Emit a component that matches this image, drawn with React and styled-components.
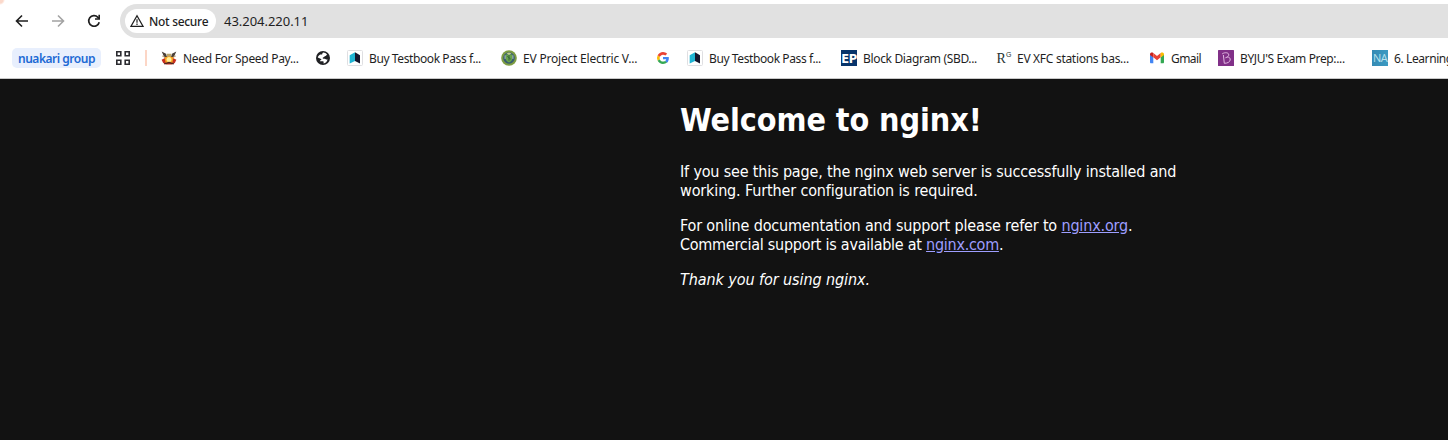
import React from 'react';
import styled, { createGlobalStyle } from 'styled-components';

const GlobalStyle = createGlobalStyle`
  * { box-sizing: border-box; }
  html, body { margin: 0; padding: 0; background: #121212; }
  body { overflow: hidden; }
`;

const Window = styled.div`
  width: 1448px;
  height: 440px;
  display: flex;
  flex-direction: column;
  overflow: hidden;
  background: #121212;
`;

const Chrome = styled.header`
  flex: none;
  height: 79px;
  background: radial-gradient(circle at 0 0, #fbd9cb 0, #fbd9cb 3px, #fff 5px);
  border-bottom: 1px solid #c9c9c9;
  font-family: 'Noto Sans', 'Open Sans', sans-serif;
  color: #1f1f1f;
`;

const Toolbar = styled.div`
  height: 38px;
  padding: 4px 0 0 12px;
  display: flex;
  align-items: center;
`;

const NavButton = styled.span`
  width: 20px;
  height: 20px;
  margin-right: 16px;
  display: flex;
  align-items: center;
  justify-content: center;
  color: ${(p) => (p.$muted ? '#a3a3a3' : '#1f1f1f')};
`;

const AddressBar = styled.div`
  flex: 1;
  height: 34px;
  padding-left: 5px;
  display: flex;
  align-items: center;
  background: #e1e1e1;
  border-radius: 17px 0 0 17px;
`;

const SecurityChip = styled.span`
  width: 91px;
  height: 24px;
  padding-left: 4px;
  display: flex;
  align-items: center;
  gap: 4px;
  background: #fff;
  border-radius: 12px;
  font-size: 12px;
  font-weight: 500;
  letter-spacing: -0.3px;
  white-space: nowrap;
`;

const Address = styled.span`
  margin-left: 8px;
  font-size: 13px;
  letter-spacing: -0.03px;
`;

const BookmarksBar = styled.nav`
  height: 40px;
  padding-left: 12px;
  display: flex;
  align-items: center;
`;

const GroupChip = styled.span`
  width: 89px;
  height: 20px;
  flex: none;
  display: flex;
  align-items: center;
  justify-content: center;
  background: #e8effd;
  border-radius: 5px;
  color: #1c69d4;
  font-size: 12px;
  font-weight: 600;
  letter-spacing: -0.48px;
  white-space: nowrap;
`;

const AppsButton = styled.span`
  flex: none;
  margin-left: 14px;
  width: 16px;
  height: 16px;
  display: flex;
`;

const Divider = styled.span`
  flex: none;
  width: 2px;
  height: 16px;
  margin: 0 14px;
  background: #fcd6c6;
`;

const Bookmark = styled.span`
  flex: none;
  width: ${(p) => p.$width}px;
  height: 20px;
  display: flex;
  align-items: center;
  gap: 6px;
  font-size: 12px;
  letter-spacing: ${(p) => p.$spacing || 0}px;
  white-space: nowrap;
  svg { flex: none; }
`;

const Page = styled.main`
  flex: 1;
  width: 560px;
  margin-left: 680px;
  color: #fff;
  font-family: 'DejaVu Sans Condensed', 'DejaVu Sans', sans-serif;
  font-stretch: condensed;
  font-size: 16px;
  line-height: 19px;
`;

const Title = styled.h1`
  margin: 22px 0;
  font-size: 32px;
  line-height: 39px;
  font-weight: 700;
  letter-spacing: ${(p) => p.$spacing}px;
  white-space: nowrap;
`;

const Paragraph = styled.p`
  margin: 0 0 16px;
`;

const Line = styled.span`
  display: block;
  white-space: nowrap;
  letter-spacing: ${(p) => p.$spacing}px;
`;

const Link = styled.a`
  color: #9e9eff;
  text-decoration: underline;
`;

const Thanks = styled.em`
  letter-spacing: ${(p) => p.$spacing}px;
`;

const Arrow = ({ flip }) => (
  <svg width="14" height="14" viewBox="0 0 14 14" fill="none" stroke="currentColor" strokeWidth="1.6">
    <path d={flip ? 'M1 7h11M7 1.5 12.5 7 7 12.5' : 'M13 7H2M7 1.5 1.5 7 7 12.5'} />
  </svg>
);

const Reload = () => (
  <svg width="14" height="14" viewBox="0 0 14 14">
    <path d="M12.2 8.2A5.3 5.3 0 1 1 10.9 3.3L12 4.5" fill="none" stroke="currentColor" strokeWidth="1.7" />
    <path d="M13 .8v5H8V4.3h3.4V.8z" fill="currentColor" />
  </svg>
);

const Warning = () => (
  <svg width="16" height="16" viewBox="0 0 16 16">
    <path d="M8 2.7 14 13.3H2z" fill="none" stroke="#1f1f1f" strokeWidth="1.3" />
    <path d="M8 6.3v3.4M8 10.6v1.3" stroke="#1f1f1f" strokeWidth="1.2" />
  </svg>
);

const Apps = () => (
  <svg width="16" height="16" viewBox="0 0 16 16" fill="none" stroke="#2b2b30" strokeWidth="1.6">
    <path d="M1.8 1.8h4v4h-4zM10.2 1.8h4v4h-4zM1.8 10.2h4v4h-4zM10.2 10.2h4v4h-4z" />
  </svg>
);

const Emblem = () => (
  <svg width="16" height="16" viewBox="0 0 16 16">
    <path d="M.7 1.4 5 3.8l.8 2.5h4.4l.8-2.5 4.3-2.4-2.2 5-2.3 3H5.2l-2.3-3z" fill="#4a4038" />
    <path d="M5.5 3.7h5l-1 4h-3z" fill="#b9a56c" />
    <path d="m1.2 6 3.2 1.5M14.8 6l-3.2 1.5" stroke="#b99b70" />
    <path d="M.6 9.8 4 8h8l3.4 1.8-1.6 3.1-3 1.5H5.2l-3-1.5z" fill="#c62f20" />
    <path d="m3.6 7.3 4.4-1 4.4 1-1 5.8H4.6z" fill="#f5a020" />
    <circle cx="8" cy="9.5" r="2.5" fill="#fff09a" />
    <path d="M3.2 13.8 8 12.5l4.8 1.3" fill="none" stroke="#4b2520" strokeWidth="1.3" />
  </svg>
);

const Globe = () => (
  <svg width="16" height="16" viewBox="0 0 16 16">
    <circle cx="8" cy="8" r="7" fill="#202124" />
    <path d="M8.2 2.6c1.500.1 3 .8 3.900 2-.8.7-1.200 1.800-2.500 1.800-.8 0-.6 1-1.500 1-.7 0-.4 1.300.4 1.300h1.300c1 0 1 .9 1.900.9h.9c-.7 2.200-1.900 3.600-4 3.800-.3-.6.6-1.800-.5-2.200H4.800c.1-.9 1.600-.6 1.600-1.600 0-1.200-2.400-1.300-3.600-2.100.3-1.200 1.300-2.400 2.500-2.900h1.600c.8-.3.1-1.500 1.300-2z" fill="#fff" />
  </svg>
);

const Testbook = () => (
  <svg width="16" height="16" viewBox="0 0 16 16">
    <rect x=".5" y=".5" width="15" height="15" rx="1" fill="#fff" stroke="#dfdfe2" />
    <path d="M2.700 5.200 8 2.200v8.700l-5.300 2.600z" fill="#20b4d2" />
    <path d="m8 2.200 5 3v8.300l-5-2.600z" fill="#15152c" />
  </svg>
);

const Energy = () => (
  <svg width="16" height="16" viewBox="0 0 16 16">
    <circle cx="8" cy="8" r="7.8" fill="#7e9d42" />
    <circle cx="8" cy="8" r="5.8" fill="#375c70" />
    <path d="M4.6 4.400h6.800v3.700c0 2-1.300 3.500-3.400 4.500-2.100-1-3.400-2.500-3.400-4.500z" fill="#68a34b" />
    <path d="M5.500 3.400 8 2.500l2.500.9L8 5z" fill="#c1cc91" />
    <path d="M4.100 5.300v3.600M11.900 5.300v3.600" stroke="#b4c0c2" />
    <path d="M8 5v5.600M6.300 6.300l3.400 2.800" stroke="#36653b" />
  </svg>
);

const Google = () => (
  <svg width="16" height="16" viewBox="0 0 48 48">
    <path fill="#EA4335" d="M24 14c2.800 0 5.200 1 7.100 2.800l5.400-5.400C33.200 8.200 28.900 6 24 6 17 6 10.900 10 8 16l6.400 4.900C15.900 16.900 19.600 14 24 14z" />
    <path fill="#4285F4" d="M41.500 24.500c0-1.300-.1-2.500-.4-3.500H24v7h9.800c-.5 2.300-1.800 4.200-3.700 5.500l6 4.700c3.500-3.300 5.400-8 5.400-13.700z" />
    <path fill="#FBBC05" d="M14.400 27.300a10 10 0 0 1 0-6.500L8 16a18 18 0 0 0 0 16z" />
    <path fill="#34A853" d="M24 42c4.900 0 9-1.600 12.100-4.300l-6-4.700c-1.700 1.100-3.700 1.700-6.100 1.700-4.400 0-8.100-3-9.600-7.200L8 32.300C10.900 38 17 42 24 42z" />
  </svg>
);

const IconText = styled.span`
  flex: none;
  width: 16px;
  height: 16px;
  display: flex;
  align-items: center;
  justify-content: center;
  overflow: hidden;
  line-height: 16px;
`;

const EpMark = styled(IconText)`
  padding-top: 1px;
  background: #07346b;
  color: #fff;
  font: 700 11.5px/16px 'DejaVu Sans', sans-serif;
  letter-spacing: -0.3px;
`;

const RgMark = styled(IconText)`
  overflow: visible;
  color: #263331;
  font: 14px/16px 'Liberation Serif', serif;
  letter-spacing: 0;
  padding: 1px 0 0 2px;
  sup { font: 7px/8px 'Liberation Sans', sans-serif; margin-top: -8px; }
`;

const NaMark = styled(IconText)`
  background: linear-gradient(90deg, #358bb4, #3b9ac2);
  color: #b9e2ee;
  font: 11px/16px 'Open Sans', sans-serif;
  letter-spacing: -0.6px;
`;

const Gmail = () => (
  <svg width="16" height="16" viewBox="0 0 16 16">
    <path d="M1 4.200v8.100c0 .5.400 1 1 1h2.300V7.200z" fill="#4285f4" />
    <path d="M15 4.200v8.100c0 .5-.4 1-1 1h-2.300V7.200z" fill="#34a853" />
    <path d="M1 4.500c0-2 2-2.500 3.300-1.500v4.400L1 5z" fill="#c5221f" />
    <path d="M4.300 3 8 5.900 11.700 3v4.300L8 10.200 4.300 7.300z" fill="#ea4335" />
    <path d="M15 4.500c0-2-2-2.500-3.300-1.500v4.400L15 5z" fill="#fbbc04" />
  </svg>
);

const Byjus = () => (
  <svg width="16" height="16" viewBox="0 0 16 16">
    <rect width="16" height="16" rx=".5" fill="#813088" />
    <path d="M4 4.200c1.200-1.600 5.600-2.200 6.600-.2.600 1.400-.3 2.300-1.300 3 2-.1 3.200 1.300 2.900 3-.4 2-2.600 3.300-5.900 3.300L5.400 5M9.300 7 7.400 7.800" fill="none" stroke="#e2b8e2" strokeWidth="1" />
  </svg>
);

const bookmarks = [
  { width: 154, icon: <Emblem />, label: 'Need For Speed Pay...', spacing: -0.3 },
  { width: 32, icon: <Globe /> },
  { width: 154, icon: <Testbook />, label: 'Buy Testbook Pass f...', spacing: -0.4 },
  { width: 154, icon: <Energy />, label: 'EV Project Electric V...', spacing: -0.2 },
  { width: 32, icon: <Google /> },
  { width: 154, icon: <Testbook />, label: 'Buy Testbook Pass f...', spacing: -0.4 },
  { width: 154, icon: <EpMark>EP</EpMark>, label: 'Block Diagram (SBD...', spacing: -0.34 },
  { width: 154, icon: <RgMark>R<sup>G</sup></RgMark>, label: 'EV XFC stations bas...', spacing: -0.29 },
  { width: 69, icon: <Gmail />, label: 'Gmail', spacing: -0.55 },
  { width: 154, icon: <Byjus />, label: "BYJU'S Exam Prep:...", spacing: -0.37 },
  { width: 154, icon: <NaMark>NA</NaMark>, label: '6. Learning', spacing: -0.4 },
];

export default function App() {
  return (
    <Window>
      <GlobalStyle />
      <Chrome>
        <Toolbar>
          <NavButton><Arrow /></NavButton>
          <NavButton $muted><Arrow flip /></NavButton>
          <NavButton><Reload /></NavButton>
          <AddressBar>
            <SecurityChip><Warning />Not secure</SecurityChip>
            <Address>43.204.220.11</Address>
          </AddressBar>
        </Toolbar>
        <BookmarksBar>
          <GroupChip>nuakari group</GroupChip>
          <AppsButton><Apps /></AppsButton>
          <Divider />
          {bookmarks.map((b, i) => (
            <Bookmark key={i} $width={b.width} $spacing={b.spacing}>
              {b.icon}
              {b.label}
            </Bookmark>
          ))}
        </BookmarksBar>
      </Chrome>
      <Page>
        <Title $spacing={-0.08}>Welcome to nginx!</Title>
        <Paragraph>
          <Line $spacing={-0.165}>If you see this page, the nginx web server is successfully installed and</Line>
          <Line $spacing={-0.14}>working. Further configuration is required.</Line>
        </Paragraph>
        <Paragraph>
          <Line $spacing={-0.165}>For online documentation and support please refer to <Link>nginx.org</Link>.</Line>
          <Line $spacing={-0.26}>Commercial support is available at <Link>nginx.com</Link>.</Line>
        </Paragraph>
        <Paragraph><Thanks $spacing={-0.08}>Thank you for using nginx.</Thanks></Paragraph>
      </Page>
    </Window>
  );
}
